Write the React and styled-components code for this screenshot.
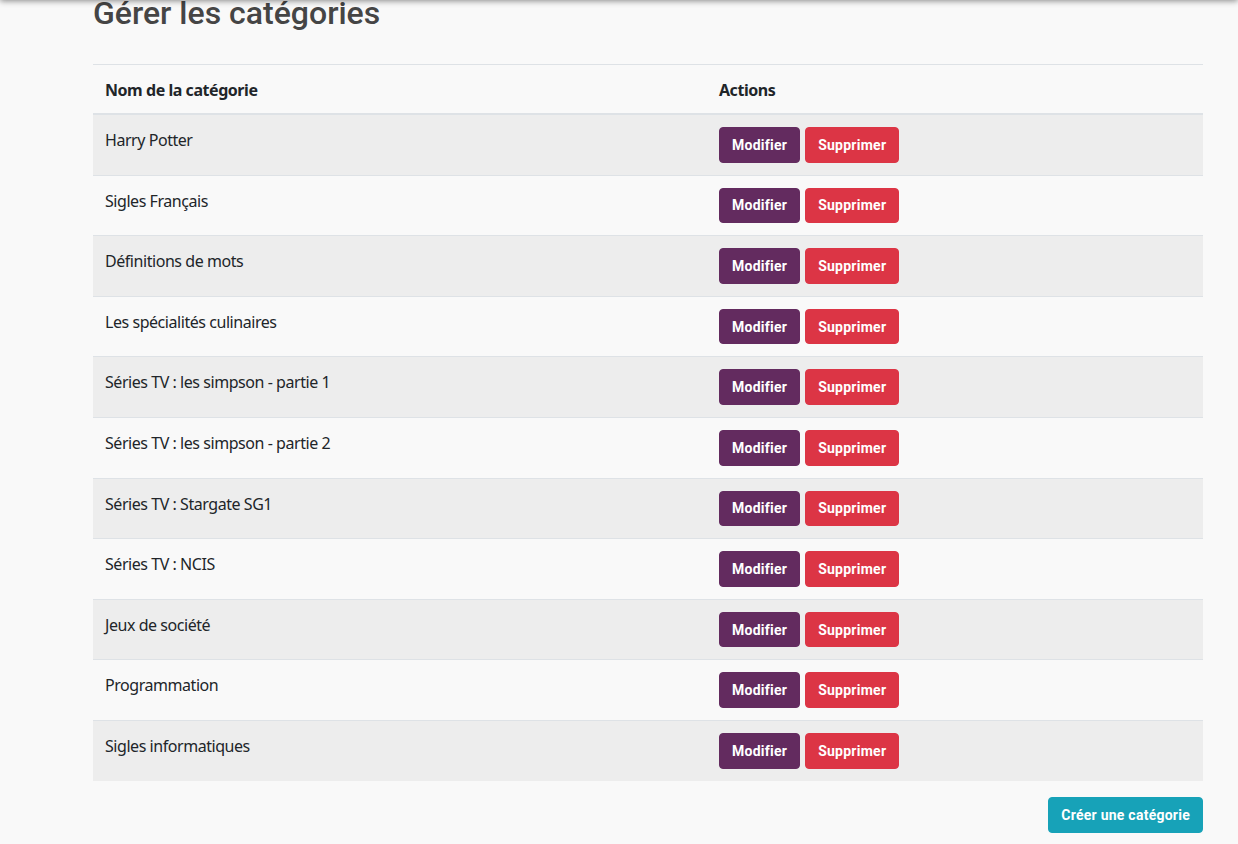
import React from 'react';
import styled, { createGlobalStyle } from 'styled-components';

const categories = [
	'Harry Potter',
	'Sigles Français',
	'Définitions de mots',
	'Les spécialités culinaires',
	'Séries TV : les simpson - partie 1',
	'Séries TV : les simpson - partie 2',
	'Séries TV : Stargate SG1',
	'Séries TV : NCIS',
	'Jeux de société',
	'Programmation',
	'Sigles informatiques',
];

const GlobalStyle = createGlobalStyle`
	* {
		box-sizing: border-box;
	}
	body {
		margin: 0;
		background-color: #f9f9f9;
		color: #212529;
		font-family: 'Noto Sans', 'Open Sans', sans-serif;
		font-size: 16px;
		overflow: hidden;
	}
`;

const App = () => {
	return (
		<>
			<GlobalStyle />
			<TopBar />
			<Wrapper>
				<Title>Gérer les catégories</Title>
				<Table>
					<thead>
						<tr>
							<Th $first>Nom de la catégorie</Th>
							<Th>Actions</Th>
						</tr>
					</thead>
					<tbody>
						{categories.map((name, index) => (
							<Row key={index} $striped={index % 2 === 0}>
								<Td>{name}</Td>
								<Td $actions>
									<Actions>
										<Button $variant='edit'>Modifier</Button>
										<Button $variant='delete'>Supprimer</Button>
									</Actions>
								</Td>
							</Row>
						))}
					</tbody>
				</Table>
				<Footer>
					<Button $variant='create'>Créer une catégorie</Button>
				</Footer>
			</Wrapper>
		</>
	);
};

const TopBar = styled.div`
	position: fixed;
	top: -60px;
	left: 0;
	width: 100%;
	height: 60px;
	background-color: #f9f9f9;
	box-shadow: 0 1px 6px rgba(0, 0, 0, 0.45);
	z-index: 10;
`;

const Wrapper = styled.div`
	width: 1110px;
	margin-left: 93px;
`;

const Title = styled.h2`
	margin: -6px 0 31.6px;
	font-family: Roboto, sans-serif;
	font-weight: 500;
	font-size: 32px;
	line-height: 1.2;
	color: #454545;
`;

const Table = styled.table`
	width: 100%;
	border-collapse: collapse;
	letter-spacing: -0.45px;
`;

const Th = styled.th`
	width: ${(p) => (p.$first ? '614px' : 'auto')};
	padding: 13px 12px 11px;
	text-align: left;
	font-weight: 700;
	line-height: 24px;
	border-top: 1px solid #dee2e6;
	border-bottom: 2px solid #dee2e6;
`;

const Row = styled.tr`
	background-color: ${(p) => (p.$striped ? '#ededed' : 'transparent')};
`;

const Td = styled.td`
	padding: ${(p) => (p.$actions ? '12px' : '13px 12px 11px')};
	vertical-align: top;
	line-height: 24px;
	border-top: 1px solid #dee2e6;
`;

const Actions = styled.div`
	display: flex;
	gap: 5px;
	letter-spacing: 0.25px;
`;

const colors = {
	edit: '#632b5f',
	delete: '#dc3545',
	create: '#17a2b8',
};

const Button = styled.button`
	height: ${(p) => (p.$variant === 'create' ? '36px' : '35.6px')};
	padding: 0 12px;
	border: 1px solid ${(p) => colors[p.$variant]};
	border-radius: 4px;
	background-color: ${(p) => colors[p.$variant]};
	color: #fff;
	font-family: Roboto, sans-serif;
	font-weight: 700;
	font-size: 14px;
	letter-spacing: 0.25px;
	cursor: pointer;
`;

const Footer = styled.div`
	display: flex;
	justify-content: flex-end;
	margin-top: 16px;
`;

export default App;
